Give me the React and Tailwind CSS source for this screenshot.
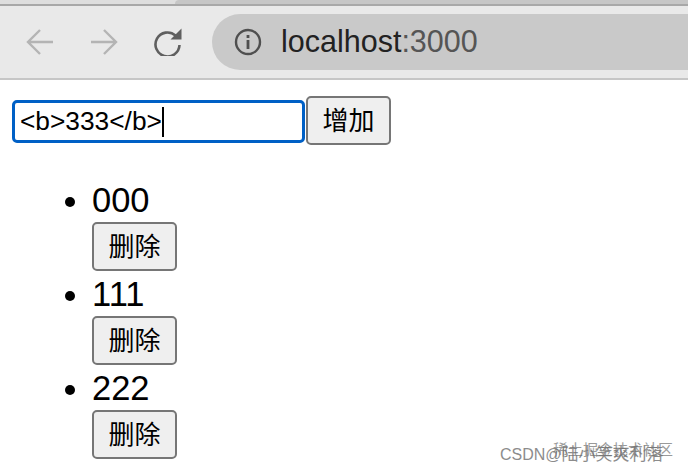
const font = { fontFamily: '"Liberation Sans", "Noto Sans CJK SC", sans-serif' };

const BackIcon = ({ flip }) => (
  <svg width="28" height="28" viewBox="0 0 28 28" fill="none" stroke="#b4b4b4" strokeWidth="2.4" className={flip ? 'rotate-180' : ''}>
    <path d="M27 14H2M14 2L2 14l12 12" />
  </svg>
);

const ReloadIcon = () => (
  <svg width="28" height="28" viewBox="0 0 28 28" fill="none">
    <path d="M21.5 7.5A12 12 0 1 0 25.5 17" stroke="#5f5f5f" strokeWidth="2.6" />
    <path d="M27.5 0.5V11.5H16.5z" fill="#5f5f5f" />
  </svg>
);

const InfoIcon = () => (
  <svg width="28" height="28" viewBox="0 0 28 28" fill="none">
    <circle cx="14" cy="14" r="12" stroke="#4f4f4f" strokeWidth="2.4" />
    <rect x="12.6" y="12" width="2.8" height="9" fill="#4f4f4f" />
    <rect x="12.6" y="7" width="2.8" height="3" fill="#4f4f4f" />
  </svg>
);

const Btn = ({ children }) => (
  <button className="w-[85px] h-[49px] flex items-center justify-center pt-px bg-[#efefef] border-2 border-[#767676] rounded-[5px] text-[26px] leading-none text-black">
    {children}
  </button>
);

const App = () => {
  const items = ['000', '111', '222'];

  return (
    <div className="relative w-[688px] h-[472px] overflow-hidden bg-white" style={font}>
      <div className="h-[6px] flex bg-[#dedede] border-b-2 border-[#a8a8a8]">
        <div className="w-[175px]" />
        <div className="flex-1 bg-[#c6c6c6] rounded-tl-[6px]" />
      </div>
      <div className="h-[74px] flex items-center bg-[#e9e9e9] border-b-2 border-[#c6c6c6]">
        <div className="flex items-center pl-[26px] gap-[36px] w-[212px]">
          <BackIcon />
          <BackIcon flip />
          <ReloadIcon />
        </div>
        <div className="flex-1 h-[56px] flex items-center gap-[19px] pl-[22px] rounded-l-[28px] bg-[#c9c9c9] text-[30.5px]">
          <InfoIcon />
          <span className="text-[#222222]">
            localhost<span className="text-[#555555]">:3000</span>
          </span>
        </div>
      </div>

      <div className="flex items-start pl-[12px] pt-[16px]">
        <div className="mt-[4px] w-[293px] h-[43px] flex items-center pl-[5px] bg-white border-[3px] border-[#0060c6] rounded-[5px] text-[26.3px] text-black">
          <span>&lt;b&gt;333&lt;/b&gt;</span>
          <span className="w-[2px] h-[30px] bg-black" />
        </div>
        <div className="ml-px">
          <Btn>增加</Btn>
        </div>
      </div>

      <ul className="list-disc pl-[92px] pt-[30px] text-[34.5px] text-black">
        {items.map((item) => (
          <li key={item} className="h-[94px]">
            <div className="h-[45px] leading-[47px]">{item}</div>
            <Btn>删除</Btn>
          </li>
        ))}
      </ul>

      <div className="absolute left-[500px] top-[444px] flex items-center h-[22px] text-[16px] text-[#707070] opacity-80 whitespace-nowrap">
        CSDN@<span className="text-[17px]">陆小笑爽利落</span>
      </div>
      <div className="absolute left-[553px] top-[439px] text-[15px] leading-[22px] text-[#707070] opacity-70 whitespace-nowrap">
        稀土掘金技术社区
      </div>
    </div>
  );
};

export default App;
